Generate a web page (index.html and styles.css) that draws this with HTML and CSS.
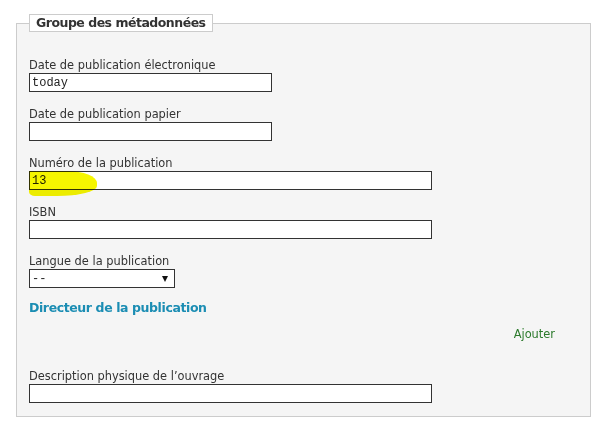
FILE: index.html
```html
<!DOCTYPE html>
<html lang="fr">

<head>
  <meta charset="UTF-8">
  <meta name="viewport" content="width=device-width, initial-scale=1.0">
  <title>Métadonnées</title>
  <link rel="stylesheet" href="styles.css">
</head>

<body>
  <form class="meta-form">
    <fieldset class="group">
      <legend>Groupe des métadonnées</legend>

      <div class="field">
        <label for="date-elec">Date de publication électronique</label>
        <input type="text" id="date-elec" class="short" value="today">
      </div>
      <div class="field">
        <label for="date-papier">Date de publication papier</label>
        <input type="text" id="date-papier" class="short">
      </div>
      <div class="field">
        <label for="numero">Numéro de la publication</label>
        <div class="marked">
          <input type="text" id="numero" class="long focused" value="13">
          <span class="highlight"></span>
        </div>
      </div>
      <div class="field">
        <label for="isbn">ISBN</label>
        <input type="text" id="isbn" class="long">
      </div>
      <div class="field">
        <label for="langue">Langue de la publication</label>
        <span class="select-wrap">
          <select id="langue">
            <option>--</option>
          </select>
        </span>
      </div>

      <h3 class="subhead">Directeur de la publication</h3>
      <div class="actions">
        <a href="#" class="add">Ajouter</a>
      </div>

      <div class="field last">
        <label for="description">Description physique de l’ouvrage</label>
        <input type="text" id="description" class="long">
      </div>
    </fieldset>
  </form>
</body>

</html>
```

FILE: styles.css
```css
* {
  box-sizing: border-box;
}

body {
  margin: 0;
  background: #fff;
  font-family: 'DejaVu Sans', Verdana, sans-serif;
  font-size: 11.4px;
  color: #333;
}

.meta-form {
  padding: 14px 15px 0 16px;
}

.group {
  margin: 0;
  width: 575px;
  padding: 26px 12px 13px 12px;
  background: #f5f5f5;
  border: 1px solid #ccc;
}

.group legend {
  margin-left: 0;
  padding: 0 6px;
  border: 1px solid #ccc;
  background: #fff;
  font-weight: bold;
  font-size: 12.5px;
  letter-spacing: -0.5px;
  line-height: 16px;
  color: #333;
}

.field {
  margin-bottom: 15px;
}

.field label {
  display: block;
  line-height: 15px;
}

.field input,
.field select {
  display: block;
  height: 19px;
  padding: 0 2px;
  border: 1px solid #333;
  background: #fff;
  font-family: 'Liberation Mono', 'Courier New', monospace;
  font-size: 12px;
  color: #222;
  outline: none;
}

.short {
  width: 243px;
}

.long {
  width: 403px;
}

.focused {
  background: #fdf0e7;
  border-color: #7f8fa3;
}

.marked {
  position: relative;
  width: 403px;
}

.highlight {
  position: absolute;
  left: 0;
  top: 0;
  width: 68px;
  height: 25px;
  background: #f6f600;
  mix-blend-mode: multiply;
  border-radius: 0 30px 40px 6px / 0 12px 10px 4px;
}

.select-wrap {
  position: relative;
  display: inline-block;
}

.select-wrap select {
  width: 146px;
  appearance: none;
  -webkit-appearance: none;
}

.select-wrap::after {
  content: '';
  position: absolute;
  right: 7px;
  top: 7px;
  border-left: 3px solid transparent;
  border-right: 3px solid transparent;
  border-top: 6px solid #111;
}

.subhead {
  margin: -3px 0 0;
  font-size: 12.5px;
  letter-spacing: -0.4px;
  line-height: 16px;
  color: #1b8db3;
}

.actions {
  display: flex;
  justify-content: flex-end;
  padding: 10px 23px 0 0;
}

.add {
  color: #2c7a2c;
  text-decoration: none;
  line-height: 16px;
}

.field.last {
  margin: 27px 0 0;
}
```
